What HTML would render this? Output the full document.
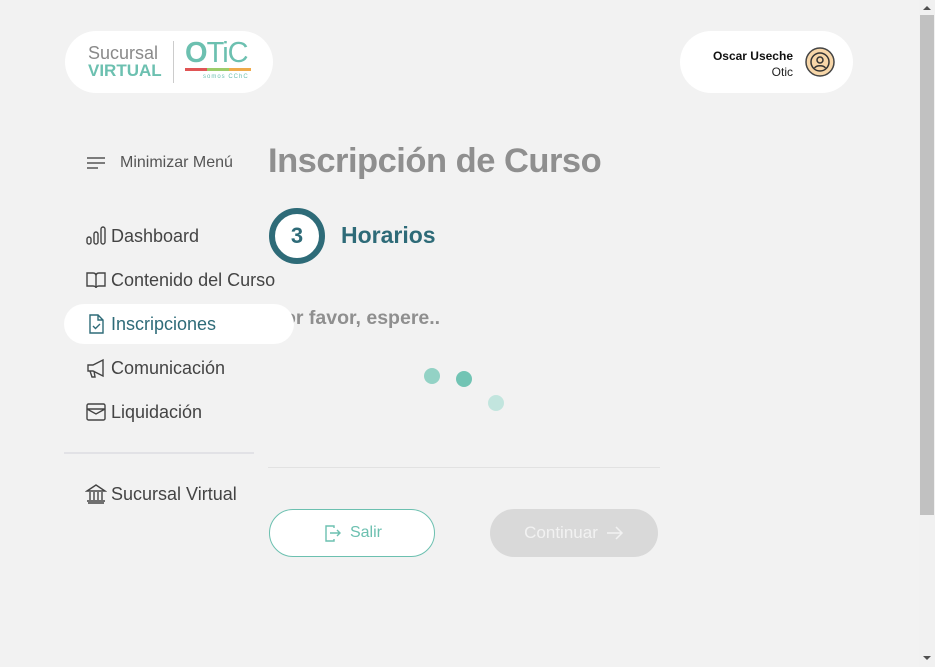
<!DOCTYPE html>
<html><head><meta charset="utf-8"><style>
*{box-sizing:border-box;margin:0;padding:0}
body{width:935px;height:667px;background:#f2f2f2;font-family:"Liberation Sans",sans-serif;position:relative;overflow:hidden;color:#444}
.abs{position:absolute}
.pill{background:#fff;border-radius:32px}
.nav{position:absolute;left:85px;font-size:18px;color:#444;display:flex;align-items:center;gap:4px}
.nav svg{width:22px;height:22px;fill:none;stroke:#444;stroke-width:1.4}
</style></head><body>
<div class="abs pill" style="left:65px;top:31px;width:208px;height:62px"></div>
<div class="abs" style="left:88px;top:44px;font-size:18px;color:#8a8a8a;line-height:18px">Sucursal</div>
<div class="abs" style="left:88px;top:62px;font-size:17px;font-weight:bold;color:#6cc0b0;line-height:18px">VIRTUAL</div>
<div class="abs" style="left:173px;top:41px;width:1px;height:42px;background:#ccc"></div>
<div class="abs" style="left:185px;top:38px;font-size:29px;color:#6cc0b0;line-height:30px;letter-spacing:-1px"><b>O</b>TiC</div>
<div class="abs" style="left:185px;top:68px;width:22px;height:3px;background:#e05555"></div>
<div class="abs" style="left:207px;top:68px;width:22px;height:3px;background:#9ccc6a"></div>
<div class="abs" style="left:229px;top:68px;width:22px;height:3px;background:#efaa4a"></div>
<div class="abs" style="left:203px;top:74px;font-size:6px;color:#6cc0b0;letter-spacing:1px">somos CChC</div>
<div class="abs pill" style="left:680px;top:31px;width:173px;height:62px"></div>
<div class="abs" style="left:690px;top:48px;width:103px;text-align:right;font-size:12px;line-height:16px"><b style="color:#111">Oscar Useche</b><br><span style="color:#222">Otic</span></div>
<svg class="abs" style="left:805px;top:47px" width="30" height="30" viewBox="0 0 30 30"><circle cx="15" cy="15" r="14" fill="#f7d6a8" stroke="#444" stroke-width="1.5"/><circle cx="15" cy="15" r="9" fill="none" stroke="#333" stroke-width="1.5"/><circle cx="15" cy="13" r="3" fill="none" stroke="#333" stroke-width="1.5"/><path d="M9.5 21c2-3 9-3 11 0" fill="none" stroke="#333" stroke-width="1.5"/></svg>
<svg class="abs" style="left:86px;top:156px" width="20" height="14"><path d="M1 2h18M1 7h18M1 12h11" stroke="#555" stroke-width="1.5"/></svg>
<div class="abs" style="left:120px;top:154px;font-size:16px;color:#555">Minimizar Menú</div>
<div class="abs pill" style="left:64px;top:304px;width:230px;height:40px;border-radius:20px;z-index:2"></div>
<div class="nav" style="top:225px"><svg viewBox="0 0 22 22"><rect x="2" y="12" width="4" height="7" rx="2"/><rect x="9" y="7" width="4" height="12" rx="2"/><rect x="16" y="2" width="4" height="17" rx="2"/></svg>Dashboard</div>
<div class="nav" style="top:269px"><svg viewBox="0 0 22 22"><path d="M2 4h6c2 0 3 1 3 3v12c0-1-1-2-3-2H2z M20 4h-6c-2 0-3 1-3 3v12c0-1 1-2 3-2h6z"/></svg>Contenido del Curso</div>
<div class="nav" style="top:313px;z-index:3;color:#2e6b78"><svg viewBox="0 0 22 22" style="stroke:#2e6b78"><path d="M5 2h8l5 5v13H5z M13 2v5h5 M8 13l2.5 2.5L15 11"/></svg>Inscripciones</div>
<div class="nav" style="top:357px"><svg viewBox="0 0 22 22"><path d="M3 8h5l10-5v16L8 14H3z M5 14l2 6h3l-1-6"/></svg>Comunicación</div>
<div class="nav" style="top:401px"><svg viewBox="0 0 22 22"><rect x="2" y="3" width="18" height="16" rx="1.5"/><path d="M2 8h18 M2 8l9 5 9-5"/></svg>Liquidación</div>
<div class="abs" style="left:64px;top:452px;width:190px;height:2px;background:#e2e2e6"></div>
<div class="nav" style="top:483px"><svg viewBox="0 0 22 22"><path d="M2 8L11 2l9 6z M3 20h16 M2 18h18 M5 9v8 M9 9v8 M13 9v8 M17 9v8"/></svg>Sucursal Virtual</div>
<div class="abs" style="left:268px;top:142px;font-size:34.5px;font-weight:bold;color:#8f8f8f;letter-spacing:-0.5px">Inscripción de Curso</div>
<div class="abs" style="left:269px;top:208px;width:56px;height:56px;border-radius:50%;border:6px solid #2e6b78;background:#fff;text-align:center;line-height:44px;font-size:22px;font-weight:bold;color:#2e6b78">3</div>
<div class="abs" style="left:341px;top:222px;font-size:23px;font-weight:bold;color:#2e6b78">Horarios</div>
<div class="abs" style="left:271px;top:307px;font-size:19.5px;font-weight:bold;color:#8f8f8f;z-index:1">Por favor, espere..</div>
<div class="abs" style="left:424px;top:368px;width:16px;height:16px;border-radius:50%;background:#93d2c5"></div>
<div class="abs" style="left:456px;top:371px;width:16px;height:16px;border-radius:50%;background:#72c4b4"></div>
<div class="abs" style="left:488px;top:395px;width:16px;height:16px;border-radius:50%;background:#c2e5de"></div>
<div class="abs" style="left:268px;top:467px;width:392px;height:1px;background:#e2e2e2"></div>
<div class="abs" style="left:269px;top:509px;width:166px;height:48px;border:1px solid #6cc0b0;border-radius:24px;background:#fff;display:flex;align-items:center;justify-content:center;gap:8px;font-size:16px;color:#6cc0b0">
<svg width="20" height="20" viewBox="0 0 20 20" fill="none" stroke="#6cc0b0" stroke-width="1.4"><path d="M12 5V3H4v15h8v-2 M8 10h10 M15 7l3 3-3 3"/></svg>Salir</div>
<div class="abs" style="left:490px;top:509px;width:168px;height:48px;border-radius:24px;background:#d9d9d9;display:flex;align-items:center;justify-content:center;gap:8px;font-size:17px;color:#f2f2f2">Continuar <svg width="18" height="16" viewBox="0 0 18 16" fill="none" stroke="#f2f2f2" stroke-width="1.5"><path d="M1 8h15 M10 2l6 6-6 6"/></svg></div>
<div class="abs" style="left:919px;top:0;width:16px;height:667px;background:#f1f1f1"></div>
<div class="abs" style="left:920px;top:15px;width:14px;height:500px;background:#c1c1c1"></div>
<svg class="abs" style="left:922px;top:4px" width="10" height="7"><path d="M1 6L5 2 9 6z" fill="#505050"/></svg>
<svg class="abs" style="left:922px;top:655px" width="10" height="7"><path d="M1 1L5 5 9 1z" fill="#505050"/></svg>
</body></html>
